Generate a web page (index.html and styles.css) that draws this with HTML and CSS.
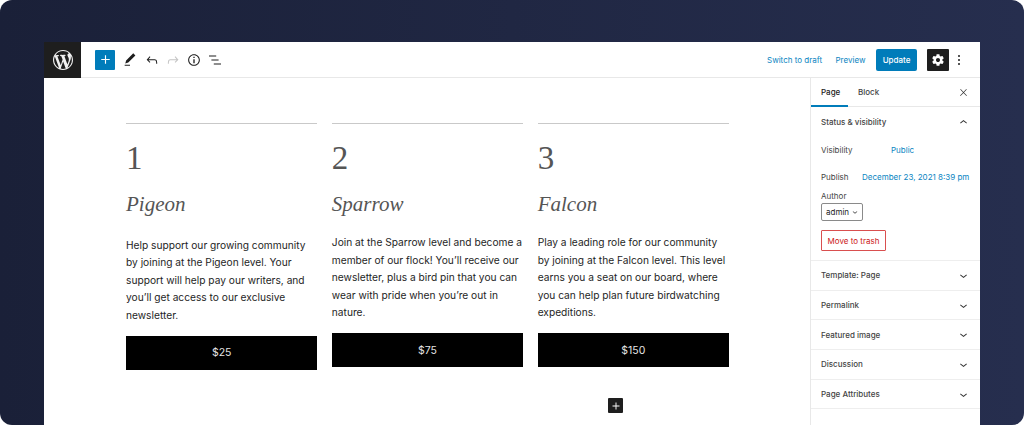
FILE: index.html
```html
<!DOCTYPE html>
<html lang="en">
<head>
    <meta charset="UTF-8">
    <meta name="viewport" content="width=device-width, initial-scale=1.0">
    <title>Edit page</title>
    <link rel="stylesheet" href="styles.css">
</head>
<body>
    <svg class="icon-defs" width="0" height="0">
        <symbol id="chevron-down" viewBox="0 0 24 24"><path d="M17.5 11.6L12 16l-5.5-4.4.9-1.2L12 14l4.5-3.6 1 1.2z"/></symbol>
        <symbol id="chevron-up" viewBox="0 0 24 24"><path d="M6.5 12.4L12 8l5.5 4.4-.9 1.2L12 10l-4.5 3.6-1-1.2z"/></symbol>
        <symbol id="plus" viewBox="0 0 24 24"><path d="M18 11.2h-5.2V6h-1.6v5.2H6v1.6h5.2V18h1.6v-5.2H18z"/></symbol>
    </svg>

    <div class="editor">
        <header class="toolbar">
            <div class="logo">
                <svg width="20" height="20" viewBox="0 0 20 20"><path d="M20 10c0-5.51-4.49-10-10-10C4.48 0 0 4.49 0 10c0 5.52 4.48 10 10 10 5.51 0 10-4.48 10-10zM7.78 15.37L4.37 6.22c.55-.02 1.17-.08 1.17-.08.5-.06.44-1.13-.06-1.11 0 0-1.45.11-2.37.11-.18 0-.37 0-.58-.01C4.12 2.69 6.87 1.11 10 1.11c2.33 0 4.45.87 6.05 2.34-.68-.11-1.65.39-1.65 1.58 0 .74.45 1.36.9 2.1.35.61.55 1.36.55 2.46 0 1.49-1.4 5-1.4 5l-3.03-8.37c.54-.02.82-.17.82-.17.5-.05.44-1.25-.06-1.22 0 0-1.44.12-2.38.12-.87 0-2.33-.12-2.33-.12-.5-.03-.56 1.2-.06 1.22l.92.08 1.26 3.41zM17.41 10c.24-.64.74-1.87.43-4.25.7 1.29 1.05 2.71 1.05 4.25 0 3.29-1.73 6.24-4.4 7.78.97-2.59 1.94-5.2 2.92-7.78zM6.1 18.09C3.12 16.65 1.11 13.53 1.11 10c0-1.3.23-2.48.72-3.59C3.25 10.3 4.67 14.2 6.1 18.09zm4.03-6.63l2.58 6.98c-.86.29-1.76.45-2.71.45-.79 0-1.57-.11-2.29-.33.81-2.38 1.62-4.74 2.42-7.1z"/></svg>
            </div>
            <div class="tools">
                <button class="inserter"><svg width="17" height="17"><use href="#plus"/></svg></button>
                <svg class="tool" viewBox="0 0 24 24"><path d="M20.1 5.1L16.9 2 6.2 12.7l-1.3 4.4 4.5-1.3L20.1 5.1zM4 20.8h8v-1.5H4v1.5z"/></svg>
                <svg class="tool" viewBox="0 0 24 24"><path d="M18.3 11.7c-.6-.6-1.4-.9-2.3-.9H6.7l2.9-3.3-1.1-1-4.5 5L8.5 16l1-1-2.7-2.7H16c.5 0 .9.2 1.3.5 1 1 1 3.4 1 4.5v.3h1.5v-.2c0-1.5 0-4.3-1.5-5.7z"/></svg>
                <svg class="tool tool-off" viewBox="0 0 24 24"><path d="M15.6 6.5l-1.1 1 2.9 3.3H8c-.9 0-1.7.3-2.3.9-1.4 1.5-1.4 4.2-1.4 5.6v.2h1.5v-.3c0-1.1 0-3.5 1-4.5.3-.3.7-.5 1.3-.5h9.2L14.5 15l1.1 1.1 4.6-4.6-4.6-5z"/></svg>
                <svg class="tool" viewBox="0 0 24 24"><path d="M12 3.2c-4.8 0-8.8 3.9-8.8 8.8 0 4.8 3.9 8.8 8.8 8.8 4.8 0 8.8-3.9 8.8-8.8 0-4.8-4-8.8-8.8-8.8zm0 16c-4 0-7.2-3.3-7.2-7.2C4.8 8 8 4.8 12 4.8s7.2 3.3 7.2 7.2c0 4-3.2 7.2-7.2 7.2zM11 17h2v-6h-2v6zm0-8h2V7h-2v2z"/></svg>
                <svg class="tool" viewBox="0 0 24 24"><path d="M13.8 5.2H3v1.5h10.8V5.2zm-3.6 12v1.5H21v-1.5H10.2zm7.2-6H6.6v1.5h10.8v-1.5z"/></svg>
            </div>
            <div class="actions">
                <a class="action-link">Switch to draft</a>
                <a class="action-link">Preview</a>
                <button class="update">Update</button>
                <button class="settings">
                    <svg width="14" height="14" viewBox="0 0 24 24"><path d="M19.43 12.98c.04-.32.07-.64.07-.98s-.03-.66-.07-.98l2.11-1.65c.19-.15.24-.42.12-.64l-2-3.46c-.12-.22-.39-.3-.61-.22l-2.49 1c-.52-.4-1.08-.73-1.69-.98l-.38-2.65C14.46 2.18 14.25 2 14 2h-4c-.25 0-.46.18-.49.42l-.38 2.65c-.61.25-1.17.59-1.69.98l-2.49-1c-.23-.09-.49 0-.61.22l-2 3.46c-.13.22-.07.49.12.64l2.11 1.65c-.04.32-.07.65-.07.98s.03.66.07.98l-2.11 1.65c-.19.15-.24.42-.12.64l2 3.46c.12.22.39.3.61.22l2.49-1c.52.4 1.08.73 1.69.98l.38 2.65c.03.24.24.42.49.42h4c.25 0 .46-.18.49-.42l.38-2.65c.61-.25 1.17-.59 1.69-.98l2.49 1c.23.09.49 0 .61-.22l2-3.46c.12-.22.07-.49-.12-.64l-2.11-1.65zM12 15.5c-1.93 0-3.5-1.57-3.5-3.5s1.57-3.5 3.5-3.5 3.5 1.57 3.5 3.5-1.57 3.5-3.5 3.5z"/></svg>
                </button>
                <div class="dots"><span></span><span></span><span></span></div>
            </div>
        </header>

        <div class="workspace">
            <main class="content">
                <div class="tiers">
                    <section class="tier tier-first">
                        <div class="tier-num">1</div>
                        <h2 class="tier-name">Pigeon</h2>
                        <p class="tier-text">Help support our growing community by joining at the Pigeon level. Your support will help pay our writers, and you’ll get access to our exclusive newsletter.</p>
                        <div class="tier-button">$25</div>
                    </section>
                    <section class="tier">
                        <div class="tier-num">2</div>
                        <h2 class="tier-name">Sparrow</h2>
                        <p class="tier-text">Join at the Sparrow level and become a member of our flock! You’ll receive our newsletter, plus a bird pin that you can wear with pride when you’re out in nature.</p>
                        <div class="tier-button">$75</div>
                    </section>
                    <section class="tier">
                        <div class="tier-num">3</div>
                        <h2 class="tier-name">Falcon</h2>
                        <p class="tier-text">Play a leading role for our community by joining at the Falcon level. This level earns you a seat on our board, where you can help plan future birdwatching expeditions.</p>
                        <div class="tier-button">$150</div>
                    </section>
                </div>
                <button class="add-block"><svg width="14" height="14"><use href="#plus"/></svg></button>
            </main>

            <aside class="sidebar">
                <div class="tabs">
                    <span class="tab tab-active">Page</span>
                    <span class="tab">Block</span>
                    <svg class="close" viewBox="0 0 24 24"><path d="M13 11.8l6.1-6.3-1-1-6.1 6.2-6.1-6.2-1 1 6.1 6.3-6.5 6.7 1 1 6.5-6.6 6.5 6.6 1-1z"/></svg>
                </div>
                <div class="panel panel-open">
                    <div class="panel-head">
                        <span>Status &amp; visibility</span>
                        <svg class="chevron"><use href="#chevron-up"/></svg>
                    </div>
                    <div class="setting setting-visibility"><span>Visibility</span><a>Public</a></div>
                    <div class="setting setting-publish"><span>Publish</span><a>December 23, 2021 8:39 pm</a></div>
                    <div class="author-label">Author</div>
                    <div class="author-select">admin <svg class="chevron-small"><use href="#chevron-down"/></svg></div>
                    <button class="trash">Move to trash</button>
                </div>
                <div class="panel"><div class="panel-head"><span>Template: Page</span><svg class="chevron"><use href="#chevron-down"/></svg></div></div>
                <div class="panel"><div class="panel-head"><span>Permalink</span><svg class="chevron"><use href="#chevron-down"/></svg></div></div>
                <div class="panel"><div class="panel-head"><span>Featured image</span><svg class="chevron"><use href="#chevron-down"/></svg></div></div>
                <div class="panel"><div class="panel-head"><span>Discussion</span><svg class="chevron"><use href="#chevron-down"/></svg></div></div>
                <div class="panel"><div class="panel-head"><span>Page Attributes</span><svg class="chevron"><use href="#chevron-down"/></svg></div></div>
            </aside>
        </div>
    </div>
</body>
</html>
```

FILE: styles.css
```css
* {
    box-sizing: border-box;
}

html {
    height: 100%;
    background-color: white;
}

body {
    height: 100%;
    margin: 0;
    padding: 42px 44px 0;
    overflow: hidden;
    border-radius: 12px;
    background: linear-gradient(90deg, #1a2038, #262e4e);
    font-family: Inter, "Liberation Sans", sans-serif;
    color: #1e1e1e;
}

button {
    border: 0;
    padding: 0;
    font-family: inherit;
}

.icon-defs {
    position: absolute;
}

.editor {
    height: 383px;
    background-color: white;
    display: flex;
    flex-direction: column;
}

/* top bar */
.toolbar {
    height: 36px;
    flex-shrink: 0;
    display: flex;
    align-items: center;
    border-bottom: 1px solid #e8e8e8;
}

.logo {
    width: 37px;
    height: 36px;
    background-color: #1e1e1e;
    display: flex;
    align-items: center;
    justify-content: center;
}

.logo svg {
    fill: #f0f0f0;
}

.tools {
    display: flex;
    align-items: center;
    gap: 5.3px;
    margin-left: 14px;
}

.inserter {
    width: 20px;
    height: 20px;
    background-color: #007cba;
    border-radius: 1px;
    display: flex;
    align-items: center;
    justify-content: center;
    fill: white;
    margin-right: 2px;
}

.tool {
    width: 16px;
    height: 16px;
    fill: #1e1e1e;
}

.tool-off {
    fill: #c4c4c4;
}

.actions {
    margin-left: auto;
    display: flex;
    align-items: center;
    padding-right: 20px;
}

.action-link {
    font-size: 8px;
    color: #0a85c2;
    margin-right: 13.5px;
}

.update {
    width: 41px;
    height: 22px;
    background-color: #007cba;
    color: white;
    font-size: 8px;
    font-weight: 500;
    border-radius: 2px;
    margin-left: -3px;
}

.settings {
    width: 22px;
    height: 22px;
    margin-left: 10px;
    background-color: #1e1e1e;
    fill: white;
    border-radius: 1px;
    display: flex;
    align-items: center;
    justify-content: center;
}

.dots {
    margin-left: 9px;
    display: flex;
    flex-direction: column;
    gap: 2px;
}

.dots span {
    width: 2px;
    height: 2px;
    border-radius: 50%;
    background-color: #1e1e1e;
}

.workspace {
    flex: 1;
    display: flex;
    min-height: 0;
}

/* page content */
.content {
    flex: 1;
    padding: 45px 0 0 82px;
    position: relative;
}

.tiers {
    width: 603px;
    display: grid;
    grid-template-columns: repeat(3, 1fr);
    gap: 14.5px;
}

.tier {
    border-top: 1px solid #c9c9c9;
    padding-top: 16px;
}

.tier-num {
    font-family: "Liberation Serif", serif;
    font-size: 33px;
    line-height: 36px;
    color: #555;
}

.tier-name {
    margin: 13px 0 0;
    font-family: "Liberation Serif", serif;
    font-size: 21px;
    line-height: 30px;
    font-style: italic;
    font-weight: normal;
    color: #555;
}

.tier-text {
    margin: 15px 0 11.5px;
    font-size: 10.2px;
    line-height: 17.6px;
    color: #1e1e1e;
}

.tier-first .tier-text {
    margin-top: 17.5px;
}

.tier-button {
    height: 34px;
    background-color: black;
    color: #e4e4e4;
    font-size: 10.5px;
    display: flex;
    align-items: center;
    justify-content: center;
}

.add-block {
    position: absolute;
    left: 564px;
    top: 320px;
    width: 15px;
    height: 15px;
    background-color: #1e1e1e;
    fill: white;
    border-radius: 1px;
    display: flex;
    align-items: center;
    justify-content: center;
}

/* settings sidebar */
.sidebar {
    width: 170px;
    flex-shrink: 0;
    border-left: 1px solid #e8e8e8;
    font-size: 8px;
    color: #444;
}

.tabs {
    height: 29px;
    display: flex;
    align-items: stretch;
    border-bottom: 1px solid #e8e8e8;
}

.tab {
    font-weight: 500;
    display: flex;
    align-items: center;
    padding: 0 10px;
}

.tab-active {
    width: 37px;
    border-bottom: 2px solid #007cba;
    margin-bottom: -1px;
    color: #222;
}

.close {
    width: 11px;
    height: 11px;
    fill: #333;
    margin: auto 11px auto auto;
}

.panel {
    height: 29.7px;
    border-bottom: 1px solid #eee;
}

.panel-head {
    height: 28.7px;
    padding: 0 9px 0 10px;
    display: flex;
    align-items: center;
    justify-content: space-between;
    font-weight: 500;
}

.panel-open {
    height: 154px;
}

.panel-open .panel-head {
    height: 30px;
}

.chevron {
    width: 15px;
    height: 15px;
    fill: #333;
}

.setting {
    display: flex;
    padding-left: 10px;
    height: 20px;
    align-items: center;
}

.setting a {
    color: #0a85c2;
}

.setting-visibility {
    margin-top: 3px;
}

.setting-visibility span {
    width: 70px;
}

.setting-publish {
    margin-top: 7px;
}

.setting-publish span {
    width: 41px;
}

.author-label {
    margin: 4px 0 0 10px;
}

.author-select {
    margin: 2px 0 0 10px;
    width: 41.5px;
    height: 18px;
    border: 1px solid #8a8a8a;
    border-radius: 2px;
    color: #1e1e1e;
    display: flex;
    align-items: center;
    justify-content: space-between;
    padding: 0 2px 0 4px;
}

.chevron-small {
    width: 10px;
    height: 10px;
    fill: #444;
}

.trash {
    display: block;
    margin: 9px 0 0 10px;
    width: 65px;
    height: 21px;
    border: 1px solid #d94f4f;
    border-radius: 1px;
    background-color: white;
    color: #cc1818;
    font-size: 8px;
}
```
